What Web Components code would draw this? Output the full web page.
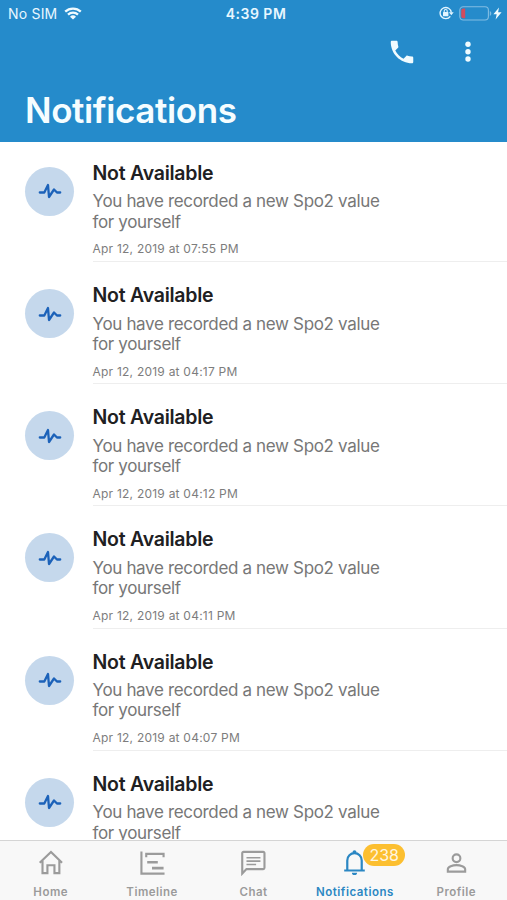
<!DOCTYPE html>
<html lang="en">
<head>
<meta charset="utf-8">
<title>Notifications</title>
<style>
html,body{margin:0;height:100%;overflow:hidden;background:#fff}
body{font-family:Inter,"Liberation Sans",sans-serif}
</style>
</head>
<body>
<notifications-app></notifications-app>
<script>
class Base extends HTMLElement {
  constructor() {
    super();
    this.attachShadow({ mode: 'open' });
  }
  connectedCallback() { this.shadowRoot.innerHTML = this.render(); }
}

customElements.define('status-bar', class extends Base {
  render() {
    return `<style>
      :host{display:grid;grid-template-columns:1fr auto 1fr;align-items:center;height:27px;padding:0 5px 0 8px;color:#e8f7ff;font-size:14px;line-height:18px}
      div{display:flex;align-items:center}
      .left{letter-spacing:.2px}
      .left svg{margin-left:7px}
      .time{font-weight:600;font-size:14px;letter-spacing:.5px;padding-left:2px}
      .right{justify-content:flex-end}
      svg{display:block}
    </style>
    <div class="left"><span>No SIM</span>
      <svg width="18" height="13" viewBox="0 0 18 13" fill="none" stroke="#f0fbff" stroke-width="2.3"><path d="M1.2 4.7a11.3 11.3 0 0 1 15.6 0M4 7.7a7.3 7.3 0 0 1 10 0"/><path d="M9 12.6 6 9.7a4.3 4.3 0 0 1 6 0z" fill="#f0fbff" stroke="none"/></svg>
    </div>
    <div class="time">4:39 PM</div>
    <div class="right">
      <svg style="margin-top:-1px" width="15" height="14" viewBox="0 0 15 14" fill="none"><path d="M11.300 10.300A5.600 5.600 0 1 1 12.300 6.500" stroke="#e3f5ff" stroke-width="1.4"/><path d="M9.900 6.200h4.800l-2.400 3.100z" fill="#e3f5ff"/><rect x="4" y="6" width="5.400" height="4.300" rx=".5" fill="#e3f5ff"/><path d="M5.200 6.300V5a1.500 1.500 0 0 1 3 0v1.300" stroke="#e3f5ff" stroke-width="1.1"/></svg>
      <svg style="margin-left:5px" width="33" height="15" viewBox="0 0 33 15"><rect x=".8" y=".8" width="28.6" height="13.2" rx="3.4" fill="none" stroke="#82bde3" stroke-width="1.1"/><path d="M30.800 5v5c2-.7 2-4.300 0-5z" fill="#82bde3"/><path d="M4.200 2.600h2v9.600h-2a2 2 0 0 1-2-2V4.600a2 2 0 0 1 2-2z" fill="#d24c5e"/></svg>
      <svg style="margin-left:1px" width="9" height="13" viewBox="0 0 9 13"><path d="M6 .5.4 7.200h3.300L2.600 12.500 8.600 5.300H5.100z" fill="#f0fbff"/></svg>
    </div>`;
  }
});

customElements.define('app-header', class extends Base {
  render() {
    return `<style>
      :host{display:block;box-sizing:border-box;height:142px;background:#258bcb;color:#f5fdff}
      .actions{display:flex;justify-content:flex-end;align-items:center;height:50px;gap:37px;padding-right:25px}
      svg{display:block}
      h1{margin:10px 0 0 25px;font-size:35px;line-height:46px;font-weight:600;letter-spacing:-.4px}
    </style>
    <status-bar></status-bar>
    <div class="actions">
      <svg width="30" height="30" viewBox="0 0 24 24" fill="#f0fbff"><path d="M6.620 10.790c1.440 2.830 3.760 5.140 6.590 6.590l2.200-2.200c.27-.27.67-.36 1.020-.24 1.120.37 2.330.57 3.570.57.55 0 1 .45 1 1V20c0 .55-.45 1-1 1-9.390 0-17-7.610-17-17 0-.55.45-1 1-1h3.500c.55 0 1 .45 1 1 0 1.250.2 2.450.57 3.570.11.35.03.74-.25 1.020z"/></svg>
      <svg width="28" height="30" viewBox="0 0 28 30" fill="#f0fbff"><circle cx="14" cy="7.300" r="2.700"/><circle cx="14" cy="14.700" r="2.700"/><circle cx="14" cy="22" r="2.700"/></svg>
    </div>
    <h1><slot></slot></h1>`;
  }
});

customElements.define('notification-item', class extends Base {
  render() {
    return `<style>
      :host{display:grid;grid-template-columns:49px 1fr;column-gap:18.500px;box-sizing:border-box;height:122.200px;padding-left:25px;flex:none}
      .icon{width:49px;height:49px;margin-top:27px;border-radius:50%;background:#c5d8ec;display:flex;align-items:center;justify-content:center}
      .body{box-sizing:border-box;height:122.200px;padding-top:20px;border-bottom:1px solid #eee}
      h2,p,time{margin:0;display:block;white-space:nowrap}
      h2{font-size:19.500px;line-height:26px;font-weight:600;color:#202022;letter-spacing:-.24px}
      p{font-size:17px;line-height:20.300px;margin-top:5.500px;color:#777;white-space:pre-line;letter-spacing:-.34px}
      time{font-size:12px;line-height:16px;margin-top:9.500px;color:#7d7d7d;letter-spacing:.23px}
    </style>
    <div class="icon"><svg width="26" height="20" viewBox="0 0 26 20" fill="none" stroke="#1c62b9" stroke-width="2.300" stroke-linecap="round" stroke-linejoin="round"><path d="M2.800 11.500h4.500L11 4l1 12 5-7.500 3 3h3.200"/></svg></div>
    <div class="body"><h2>Not Available</h2><p>You have recorded a new Spo2 value
for yourself</p><time>${this.getAttribute('time')}</time></div>`;
  }
});

const ICONS = {
  home: '<path d="M2.300 13.200 14 2l11.500 11.200M5.200 11v13h5.100v-8.200h7.300v8.200h5.100V11"/>',
  timeline: '<path d="M2 1.500V24.500H26M7 7.500V4H25V7.500" stroke-width="2.200"/><path d="M8 12.700H19M13 18.800H25" stroke-width="2.800"/>',
  chat: '<path d="M1.800 24.500V3.300a1.300 1.300 0 0 1 1.300-1.300h20.500a1.300 1.300 0 0 1 1.300 1.300v15.200a1.300 1.300 0 0 1-1.300 1.300H6.200z"/><path d="M6.200 8h14.500M6.200 11.500h14.500M6.200 15h10" stroke-width="1.700"/>',
  bell: '<path d="M2.800 21.300h21.400M6 21V10.800a7.500 7.500 0 0 1 15 0V21" stroke-width="2.300"/><circle cx="13.500" cy="2.200" r="2" fill="currentColor" stroke="none"/><path d="M10.800 23.500h5.400a2.700 2.500 0 0 1-5.400 0z" fill="currentColor" stroke="none"/>',
  person: '<circle cx="13.500" cy="8.600" r="4"/><path d="M4.500 22.500v-2.500c0-2.600 5-4.300 9-4.300s9 1.700 9 4.300v2.500z"/>'
};

customElements.define('tab-item', class extends Base {
  render() {
    const badge = this.getAttribute('badge');
    return `<style>
      :host{display:flex;flex-direction:column;align-items:center;position:relative;flex:1 1 0;min-width:0;color:#9b9b9b;padding-top:9px}
      :host([active]){color:#2b87c3}
      svg{display:block}
      .label{margin-top:8px;font-size:11.500px;line-height:16px;font-weight:600;letter-spacing:.5px;white-space:nowrap}
      .badge{position:absolute;left:59px;top:3px;width:42px;height:22px;border-radius:11px;background:#fcbf30;color:#fff6e2;font-size:16px;line-height:22px;text-align:center}
    </style>
    <svg width="27" height="27" viewBox="0 0 27 27" fill="none" stroke="currentColor" stroke-width="2.200">${ICONS[this.getAttribute('icon')]}</svg>
    <span class="label"><slot></slot></span>
    ${badge ? `<span class="badge">${badge}</span>` : ''}`;
  }
});

customElements.define('tab-bar', class extends Base {
  render() {
    return `<style>
      :host{display:flex;box-sizing:border-box;height:60px;flex:none;background:#f8f8f8;border-top:1px solid #d5d5d5}
    </style><slot></slot>`;
  }
});

customElements.define('notifications-app', class extends Base {
  render() {
    const times = ['07:55', '04:17', '04:12', '04:11', '04:07', '04:05'];
    return `<style>
      :host{display:flex;flex-direction:column;width:507px;height:900px;overflow:hidden;background:#fff}
      app-header{flex:none}
      main{flex:1;min-height:0;display:flex;flex-direction:column;overflow:hidden}
      notification-item:first-child{margin-top:-2.200px}
    </style>
    <app-header>Notifications</app-header>
    <main>${times.map(t => `<notification-item time="Apr 12, 2019 at ${t} PM"></notification-item>`).join('')}</main>
    <tab-bar>
      <tab-item icon="home">Home</tab-item>
      <tab-item icon="timeline">Timeline</tab-item>
      <tab-item icon="chat">Chat</tab-item>
      <tab-item icon="bell" badge="238" active>Notifications</tab-item>
      <tab-item icon="person">Profile</tab-item>
    </tab-bar>`;
  }
});
</script>
</body>
</html>
